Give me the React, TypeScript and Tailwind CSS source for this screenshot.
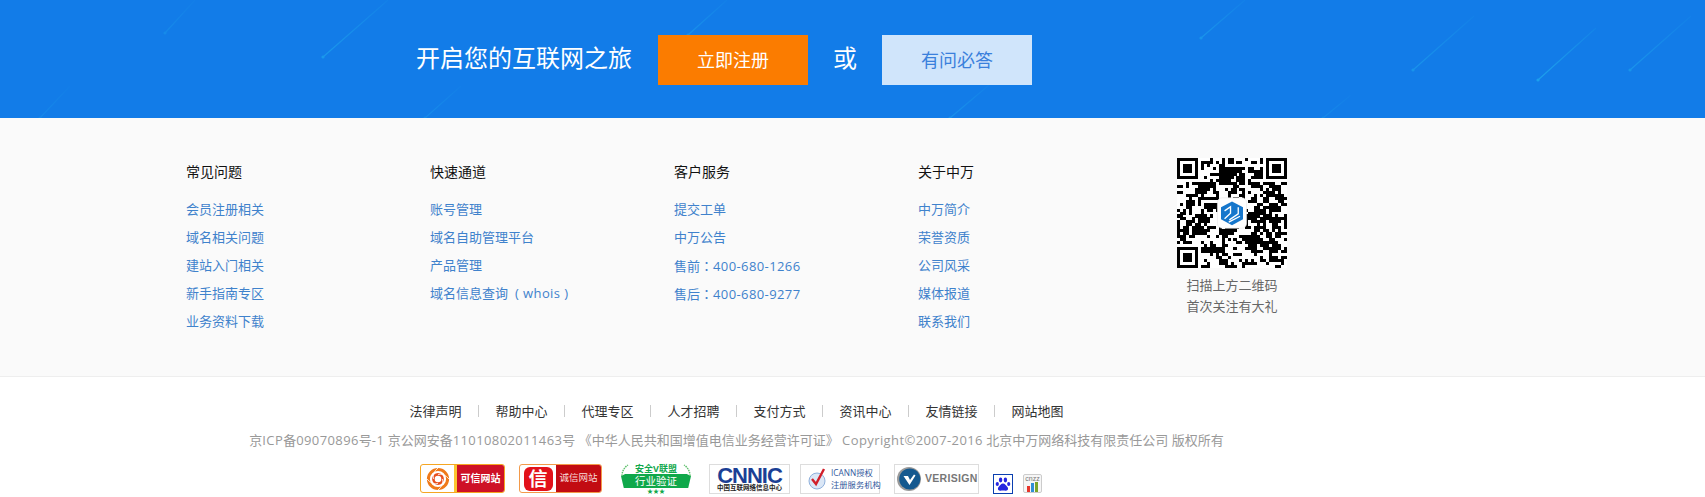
const cjk = "font-['Open_Sans','Noto_Sans_CJK_SC',sans-serif]";
const latin = "tracking-[0.4px]";

const columns = [
  { title: "常见问题", links: ["会员注册相关", "域名相关问题", "建站入门相关", "新手指南专区", "业务资料下载"] },
  { title: "快速通道", links: ["账号管理", "域名自助管理平台", "产品管理", "域名信息查询|whois"] },
  { title: "客户服务", links: ["提交工单", "中万公告", "售前：400-680-1266", "售后：400-680-9277"] },
  { title: "关于中万", links: ["中万简介", "荣誉资质", "公司风采", "媒体报道", "联系我们"] },
];

const navLinks = ["法律声明", "帮助中心", "代理专区", "人才招聘", "支付方式", "资讯中心", "友情链接", "网站地图"];

// head (bottom left) -> tail (top right)
const streaks = [
  [40, 118, 70, 86, 0.3],
  [165, 33, 195, 0, 0.35],
  [323, 57, 388, 0, 0.7],
  [425, 118, 461, 86, 0.4],
  [688, 35, 727, 0, 0.55],
  [950, 118, 989, 85, 0.55],
  [1201, 38, 1245, 0, 0.6],
  [1323, 118, 1351, 95, 0.35],
  [1413, 70, 1474, 16, 0.6],
  [1538, 80, 1596, 28, 0.9],
  [1630, 70, 1691, 16, 0.6],
];

function Streaks() {
  return (
    <svg className="absolute inset-0 pointer-events-none" width="1705" height="118">
      <defs>
        {streaks.map(([x1, y1, x2, y2], i) => (
          <linearGradient key={i} id={`streak${i}`} gradientUnits="userSpaceOnUse" x1={x1} y1={y1} x2={x2} y2={y2}>
            <stop offset="0" stopColor="#1ea4ee" />
            <stop offset="1" stopColor="#1ea4ee" stopOpacity="0.2" />
          </linearGradient>
        ))}
      </defs>
      {streaks.map(([x1, y1, x2, y2, o], i) => (
        <g key={i} opacity={o}>
          <line x1={x1} y1={y1} x2={x2} y2={y2} stroke={`url(#streak${i})`} strokeWidth="1.2" />
          <circle cx={x1} cy={y1} r="1.6" fill="#1ea4ee" />
        </g>
      ))}
    </svg>
  );
}

function QrCode() {
  const n = 37;
  const cells: React.ReactNode[] = [];
  let seed = 90817;
  const next = () => {
    seed = (seed * 1103515245 + 12345) & 0x7fffffff;
    return (seed >> 16) % 100;
  };
  const grid: boolean[][] = [];
  const inFinder = (x: number, y: number) =>
    (x < 8 && y < 8) || (x >= n - 8 && y < 8) || (x < 8 && y >= n - 8);
  for (let y = 0; y < n; y++) {
    grid.push([]);
    for (let x = 0; x < n; x++) {
      // neighbours pull the module to their value, giving the chunky look of the code
      const left = x > 0 ? grid[y][x - 1] : false;
      const up = y > 0 ? grid[y - 1][x] : false;
      const pull = (left ? 10 : -8) + (up ? 8 : -5);
      const on = next() < 50 + pull;
      grid[y].push(on);
      if (on && !inFinder(x, y)) {
        cells.push(<rect key={`${x}-${y}`} x={x} y={y} width="1.02" height="1.02" />);
      }
    }
  }
  const finder = (x: number, y: number) => (
    <g key={`${x}${y}`}>
      <rect x={x} y={y} width="7" height="7" />
      <rect x={x + 1} y={y + 1} width="5" height="5" fill="#fff" />
      <rect x={x + 2} y={y + 2} width="3" height="3" />
    </g>
  );
  return (
    <svg width="110" height="110" viewBox="0 0 37 37" shapeRendering="crispEdges" className="bg-white">
      {cells}
      {finder(0, 0)}
      {finder(30, 0)}
      {finder(0, 30)}
      <g shapeRendering="auto">
        <rect x="13.6" y="13.4" width="9.8" height="10.2" rx="1.6" fill="#fff" stroke="#e6e6e6" strokeWidth="0.2" />
        <path d="M18.5 14.6 L22.2 16.6 V20.6 L18.5 22.6 L14.8 20.6 V16.6 Z" fill="#1677cc" />
        <path d="M16 17.8 L18 16.4 V18.6 L16 20.4 M17.6 20.8 L20.6 18.8 V16.6 M17.4 21.6 L21.2 19.6" fill="none" stroke="#fff" strokeWidth="0.45" />
      </g>
    </svg>
  );
}

function KexinBadge() {
  return (
    <div className="w-[85px] h-[29px] mt-[1px] flex border border-[#f5a623] rounded-[3px] overflow-hidden bg-white">
      <div className="w-[36px] flex items-center justify-center border-r-[3px] border-[#fbc531]">
        <svg width="24" height="24" viewBox="0 0 24 24" fill="none">
          <circle cx="12" cy="12" r="9.6" stroke="#ef7a1a" strokeWidth="3" />
          <circle cx="12" cy="12" r="4.6" stroke="#e8501e" strokeWidth="2.6" />
          <path d="M12 1 Q6 6 7.5 12 M23 12 Q18 6 12 7.5 M12 23 Q18 18 16.5 12 M1 12 Q6 18 12 16.5" stroke="#fff" strokeWidth="0.8" />
        </svg>
      </div>
      <div className={`flex-1 bg-[#ce1126] text-white text-[10px] font-bold flex items-center justify-center ${cjk}`}>可信网站</div>
    </div>
  );
}

function ChengxinBadge() {
  return (
    <div className="w-[83px] h-[29px] mt-[1px] flex border border-[#f39a4a] rounded-[3px] overflow-hidden bg-white">
      <div className="w-[36px] flex items-center justify-center">
        <div className={`w-[29px] h-[24px] bg-[#e2111a] rounded-[6px] text-white text-[19px] leading-[24px] text-center font-bold ${cjk}`}>信</div>
      </div>
      <div className={`flex-1 bg-[#c20b12] text-[#f8dcdc] text-[9.5px] flex items-center justify-center ${cjk}`}>诚信网站</div>
    </div>
  );
}

function SafetyBadge() {
  return (
    <div className="relative w-[74px] h-[31px] flex flex-col items-center">
      <div className={`text-[#11a84c] text-[9px] leading-[11px] font-bold ${cjk}`}>安全V联盟</div>
      <div className={`w-[70px] h-[14px] bg-[#0fa84a] text-white text-[10.5px] leading-[14px] text-center [clip-path:polygon(0_15%,6%_0,94%_0,100%_15%,96%_100%,4%_100%)] ${cjk}`}>行业验证</div>
      <div className="text-[#11a84c] text-[6px] leading-[6px]">★★★</div>
      {/* wheat ears either side of the ribbon */}
      <svg className="absolute left-0 top-0" width="74" height="14" viewBox="0 0 74 14" fill="none" stroke="#5cbf6a" strokeWidth="1.4" strokeDasharray="1.6 0.8">
        <path d="M3 13 Q3 6 9 2" />
        <path d="M71 13 Q71 6 65 2" />
      </svg>
    </div>
  );
}

function CnnicBadge() {
  return (
    <div className="w-[81px] h-[30px] mt-[1px] border border-[#ddd] flex flex-col items-center bg-white">
      <div className="h-[17px] mt-[2px] text-[#1b3f95] text-[22px] leading-[17px] font-bold tracking-[-1px] font-['Liberation_Sans',sans-serif]">CNNIC</div>
      <div className={`text-[#222] text-[6.5px] leading-[8px] font-bold ${cjk}`}>中国互联网络信息中心</div>
    </div>
  );
}

function IcannBadge() {
  return (
    <div className="w-[80px] h-[30px] mt-[1px] border border-[#ddd] flex items-center bg-white pl-[4px] gap-[1px]">
      <svg width="25" height="26" viewBox="0 0 25 26" fill="none" className="shrink-0">
        <circle cx="12" cy="15" r="8" fill="#dbe7f6" stroke="#8fb0dc" strokeWidth="1" />
        <path d="M7 13 L11 18 L19 3" stroke="#d11f2a" strokeWidth="2.4" />
      </svg>
      <div className={`text-[#31589c] text-[8.3px] leading-[12px] whitespace-nowrap ${cjk}`}>
        <div>ICANN授权</div>
        <div>注册服务机构</div>
      </div>
    </div>
  );
}

function VerisignBadge() {
  return (
    <div className="w-[85px] h-[30px] mt-[1px] border border-[#ddd] flex items-center pl-[2px] gap-[4px] bg-white">
      <svg width="24" height="24" viewBox="0 0 24 24" className="shrink-0">
        <circle cx="12" cy="12" r="12" fill="#9a9a9a" />
        <circle cx="12.8" cy="12" r="10.6" fill="#15598f" />
        <path d="M6.5 9 L11 9 L13 13 L17 7.5 L18.5 8.5 L12.5 18 Z" fill="#fff" />
      </svg>
      <span className="text-[#777] text-[10.5px] font-bold tracking-[0.3px] font-['Liberation_Sans',sans-serif]">VERISIGN</span>
    </div>
  );
}

function BaiduBadge() {
  return (
    <div className="w-[20px] h-[20px] mt-[11px] border border-[#0b3fb0] flex items-center justify-center bg-white">
      <svg width="16" height="15" viewBox="0 0 16 15" fill="#2424e0">
        <ellipse cx="5.6" cy="3" rx="1.7" ry="2.4" />
        <ellipse cx="10.4" cy="3" rx="1.7" ry="2.4" />
        <ellipse cx="2.3" cy="7" rx="1.6" ry="2.1" />
        <ellipse cx="13.7" cy="7" rx="1.6" ry="2.1" />
        <path d="M8 6.5 C6 6.5 5 8.6 3.6 10 C2.2 11.6 3.2 14 5.4 13.7 C6.8 13.5 9.2 13.5 10.6 13.7 C12.8 14 13.8 11.6 12.4 10 C11 8.6 10 6.5 8 6.5Z" />
      </svg>
    </div>
  );
}

function CnzzBadge() {
  return (
    <div className="w-[19px] h-[19px] mt-[11px] border border-[#ccc] rounded-[2px] flex flex-col items-center bg-[#f6f6f6]">
      <div className="text-[#777] text-[7px] leading-[7px] font-['Liberation_Sans',sans-serif]">cnzz</div>
      <div className="flex items-end gap-[1px] h-[10px]">
        <span className="w-[3px] h-[6px] bg-[#e8352b]" />
        <span className="w-[3px] h-[9px] bg-[#2f8fd6]" />
        <span className="w-[3px] h-[10px] bg-[#7aa52a]" />
      </div>
    </div>
  );
}

// fullwidth colon sits centred in the TC face, and the digits run wider than Open Sans
function LinkText({ text }: { text: string }) {
  if (text.includes("：")) {
    const [label, phone] = text.split("：");
    return (
      <>
        {label}
        <span className="font-['Noto_Sans_CJK_TC',sans-serif]">：</span>
        <span className={latin}>{phone}</span>
      </>
    );
  }
  if (text.includes("|")) {
    const [label, word] = text.split("|");
    return (
      <>
        {label}
        <span className={`ml-[7px] ${latin}`}>( {word} )</span>
      </>
    );
  }
  return <>{text}</>;
}

export default function App() {
  return (
    <div className={`w-[1705px] h-[497px] overflow-hidden bg-white ${cjk}`}>
      {/* Call to action band */}
      <div className="relative h-[118px] bg-[#127ce8]">
        <Streaks />
        <div className="relative flex items-center h-full pl-[416px] pt-[2px]">
          <span className="text-white text-[24px] w-[242px] mt-[-4px]">开启您的互联网之旅</span>
          <a className="w-[150px] h-[50px] bg-[#fb7c00] text-white text-[18px] flex items-center justify-center">立即注册</a>
          <span className="text-white text-[24px] w-[74px] text-center mt-[-4px]">或</span>
          <a className="w-[150px] h-[50px] bg-[#d0e5fb] text-[#3a80dc] text-[18px] flex items-center justify-center">有问必答</a>
        </div>
      </div>

      {/* Link columns */}
      <div className="h-[259px] bg-[#fafafa] border-b border-[#eeeeee] flex pl-[186px] pt-[40px]">
        {columns.map((col) => (
          <div key={col.title} className="w-[244px] pt-[4px]">
            <h3 className="text-[14px] leading-[20px] text-[#111] mb-[14px]">{col.title}</h3>
            <ul>
              {col.links.map((link) => (
                <li key={link} className="h-[28px] leading-[27px] text-[13px] text-[#3f82cc]">
                  <LinkText text={link} />
                </li>
              ))}
            </ul>
          </div>
        ))}
        <div className="ml-[15px] w-[110px] flex flex-col items-center">
          <QrCode />
          <p className="mt-[7px] text-[13px] leading-[21px] text-[#666] text-center whitespace-nowrap">
            扫描上方二维码
            <br />
            首次关注有大礼
          </p>
        </div>
      </div>

      {/* Bottom nav and licences */}
      <div className="w-[1473px] pt-[24px]">
        <nav className="flex justify-center h-[20px] items-center">
          {navLinks.map((item, i) => (
            <div key={item} className="flex items-center">
              {i > 0 && <span className="w-px h-[12px] bg-[#cccccc] mx-[16.5px]" />}
              <a className="text-[13px] leading-[20px] text-[#333]">{item}</a>
            </div>
          ))}
        </nav>
        <p className="mt-[9px] h-[20px] text-[13px] leading-[20px] text-[#999] text-center whitespace-nowrap">
          京<span className={latin}>ICP</span>备<span className={latin}>09070896</span>号<span className={latin}>-1</span> 京公网安备<span className={latin}>11010802011463</span>号 《中华人民共和国增值电信业务经营许可证》 <span className={latin}>Copyright©2007-2016</span> 北京中万网络科技有限责任公司 版权所有
        </p>
        <div className="mt-[13px] flex items-start pl-[420px]">
          <KexinBadge />
          <div className="ml-[14px]"><ChengxinBadge /></div>
          <div className="ml-[17px]"><SafetyBadge /></div>
          <div className="ml-[16px]"><CnnicBadge /></div>
          <div className="ml-[10px]"><IcannBadge /></div>
          <div className="ml-[14px]"><VerisignBadge /></div>
          <div className="ml-[14px]"><BaiduBadge /></div>
          <div className="ml-[10px]"><CnzzBadge /></div>
        </div>
      </div>
    </div>
  );
}
